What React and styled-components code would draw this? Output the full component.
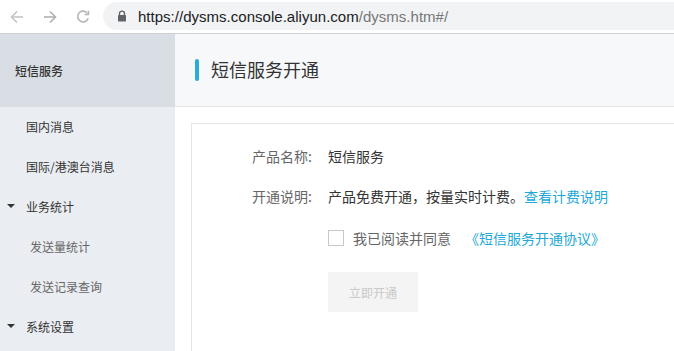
import React from 'react';
import styled, { createGlobalStyle } from 'styled-components';

const GlobalStyle = createGlobalStyle`
  html, body {
    margin: 0;
    padding: 0;
    background: #ffffff;
    overflow: hidden;
  }
  body {
    font-family: "Noto Sans CJK SC", "Liberation Sans", sans-serif;
  }
`;

const Page = styled.div`
  width: 674px;
  height: 351px;
  display: flex;
  flex-direction: column;
  overflow: hidden;
`;

const BrowserBar = styled.div`
  height: 33px;
  flex-shrink: 0;
  display: flex;
  align-items: center;
  border-bottom: 1px solid #d0d0d0;
  background: #ffffff;
`;

const NavButtons = styled.div`
  display: flex;
  align-items: center;
  gap: 17px;
  padding-left: 9px;
  width: 94px;
`;

const UrlPill = styled.div`
  flex: 1;
  height: 28px;
  margin-top: -1px;
  border-radius: 14px 0 0 14px;
  background: #f1f3f4;
  display: flex;
  align-items: center;
  padding-left: 14px;
  gap: 11px;
  font-family: "Liberation Sans", Arial, sans-serif;
  font-size: 15px;
  color: #202124;
  letter-spacing: 0.02px;
`;

const UrlPath = styled.span`
  color: #777;
`;

const Body = styled.div`
  flex: 1;
  display: flex;
  min-height: 0;
`;

const Sidebar = styled.div`
  width: 175px;
  flex-shrink: 0;
  background: #eaedf1;
  display: flex;
  flex-direction: column;
`;

const SideHeader = styled.div`
  height: 73px;
  background: #d9dee4;
  display: flex;
  align-items: center;
  padding-left: 15px;
  font-size: 12px;
  font-weight: 500;
  color: #333;
`;

const SideItem = styled.div`
  height: 40px;
  display: flex;
  align-items: center;
  padding-left: ${({ $sub }) => ($sub ? '30px' : '26px')};
  padding-bottom: 2px;
  box-sizing: border-box;
  position: relative;
  font-size: 12px;
  color: ${({ $sub }) => ($sub ? '#666' : '#333')};
`;

const Caret = styled.span`
  position: absolute;
  left: 7px;
  top: 17px;
  width: 0;
  height: 0;
  border-left: 4px solid transparent;
  border-right: 4px solid transparent;
  border-top: 4px solid #333;
`;

const Main = styled.div`
  flex: 1;
  display: flex;
  flex-direction: column;
  min-width: 0;
`;

const MainHeader = styled.div`
  height: 72px;
  background: #f7f8fa;
  border-bottom: 1px solid #e4e6ea;
  display: flex;
  align-items: center;
  padding-left: 20px;
  gap: 12px;
  flex-shrink: 0;
`;

const TitleBar = styled.span`
  width: 4px;
  height: 22px;
  border-radius: 2px;
  background: #29acd9;
`;

const Title = styled.h1`
  margin: 0;
  font-size: 18px;
  font-weight: 400;
  color: #333;
  margin-top: -2px;
`;

const Content = styled.div`
  padding: 16px 0 0 16px;
  flex: 1;
  min-height: 0;
`;

const Card = styled.div`
  width: 600px;
  height: 260px;
  border: 1px solid #e6e6e6;
  background: #fff;
  padding: 12px 0 0 60px;
  box-sizing: border-box;
`;

const Row = styled.div`
  display: flex;
  align-items: center;
  height: 40px;
  font-size: 14px;
`;

const Label = styled.span`
  width: 76px;
  color: #666;
  flex-shrink: 0;
`;

const Value = styled.span`
  color: #333;
`;

const Link = styled.a`
  color: #21a8d7;
  text-decoration: none;
`;

const AgreeRow = styled.label`
  display: flex;
  align-items: center;
  height: 40px;
  margin: 2px 0 0 76px;
  font-size: 14px;
  color: #666;
`;

const Checkbox = styled.span`
  width: 14px;
  height: 14px;
  border: 1px solid #c8c8c8;
  background: #fff;
  margin-right: 9px;
`;

const AgreeText = styled.span`
  margin-right: 14px;
`;

const Button = styled.button`
  margin: 14px 0 0 76px;
  width: 90px;
  height: 40px;
  border: none;
  background: #f4f4f4;
  color: #c9c9c9;
  font-family: "Noto Sans CJK SC", sans-serif;
  font-size: 12px;
  cursor: not-allowed;
`;

const Arrow = ({ dir, color }) => (
  <svg width="16" height="16" viewBox="0 0 16 16" fill="none" stroke={color} strokeWidth="1.6">
    {dir === 'left' ? (
      <>
        <path d="M14 8H2.5" />
        <path d="M8 2.5L2.5 8L8 13.5" />
      </>
    ) : (
      <>
        <path d="M2 8h11.5" />
        <path d="M8 2.5L13.5 8L8 13.5" />
      </>
    )}
  </svg>
);

const Reload = () => (
  <svg width="16" height="16" viewBox="0 0 16 16" fill="none" stroke="#b5b5b5" strokeWidth="1.6">
    <path d="M13.2 9.2A5.4 5.4 0 1 1 11.8 3.6" />
    <path d="M13.4 1.8v3.6H9.8" />
  </svg>
);

const Lock = () => (
  <svg width="10" height="12" viewBox="0 0 10 12">
    <path d="M2.5 5V3.6a2.5 2.5 0 0 1 5 0V5" fill="none" stroke="#5f6368" strokeWidth="1.4" />
    <rect x="1" y="5" width="8" height="6.5" rx="0.8" fill="#5f6368" />
  </svg>
);

const menu = [
  { label: '国内消息' },
  { label: '国际/港澳台消息' },
  { label: '业务统计', caret: true },
  { label: '发送量统计', sub: true },
  { label: '发送记录查询', sub: true },
  { label: '系统设置', caret: true },
];

const App = () => (
  <Page>
    <GlobalStyle />
    <BrowserBar>
      <NavButtons>
        <Arrow dir="left" color="#c4c4c4" />
        <Arrow dir="right" color="#b0b0b0" />
        <Reload />
      </NavButtons>
      <UrlPill>
        <Lock />
        <span>
          https://dysms.console.aliyun.com<UrlPath>/dysms.htm#/</UrlPath>
        </span>
      </UrlPill>
    </BrowserBar>
    <Body>
      <Sidebar>
        <SideHeader>短信服务</SideHeader>
        {menu.map((item) => (
          <SideItem key={item.label} $sub={item.sub}>
            {item.caret && <Caret />}
            {item.label}
          </SideItem>
        ))}
      </Sidebar>
      <Main>
        <MainHeader>
          <TitleBar />
          <Title>短信服务开通</Title>
        </MainHeader>
        <Content>
          <Card>
            <Row>
              <Label>产品名称:</Label>
              <Value>短信服务</Value>
            </Row>
            <Row>
              <Label>开通说明:</Label>
              <Value>产品免费开通，按量实时计费。</Value>
              <Link href="#">查看计费说明</Link>
            </Row>
            <AgreeRow>
              <Checkbox />
              <AgreeText>我已阅读并同意</AgreeText>
              <Link href="#">《短信服务开通协议》</Link>
            </AgreeRow>
            <Button disabled>立即开通</Button>
          </Card>
        </Content>
      </Main>
    </Body>
  </Page>
);

export default App;
